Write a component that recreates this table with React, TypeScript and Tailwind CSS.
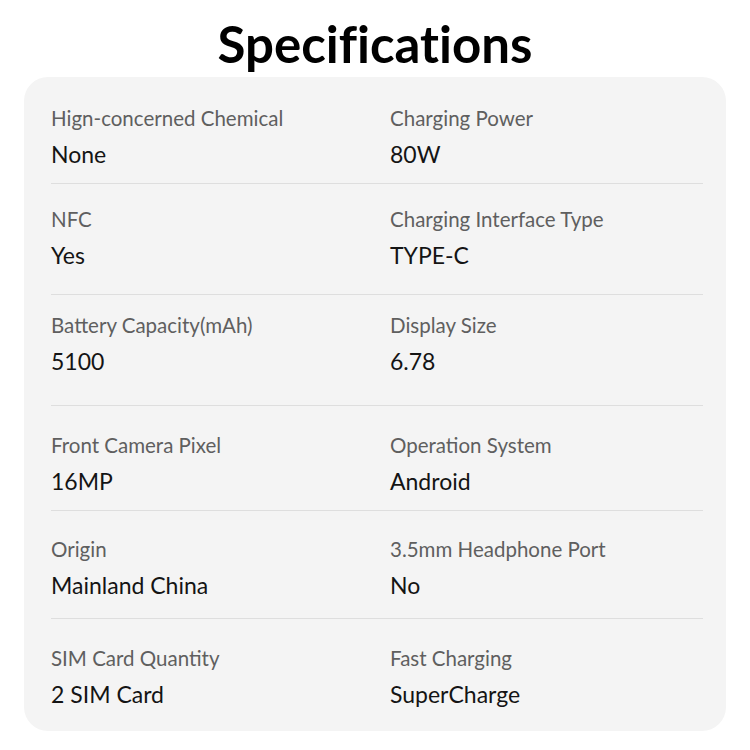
const specs = [
  { h: "h-[107px] pt-[30px]", left: ["Hign-concerned Chemical", "None"], right: ["Charging Power", "80W"] },
  { h: "h-[111px] pt-[24px]", left: ["NFC", "Yes"], right: ["Charging Interface Type", "TYPE-C"] },
  { h: "h-[111px] pt-[19px]", left: ["Battery Capacity(mAh)", "5100"], right: ["Display Size", "6.78"] },
  { h: "h-[105px] pt-[28px]", left: ["Front Camera Pixel", "16MP"], right: ["Operation System", "Android"] },
  { h: "h-[108px] pt-[27px]", left: ["Origin", "Mainland China"], right: ["3.5mm Headphone Port", "No"] },
  { h: "h-[112px] pt-[28px]", left: ["SIM Card Quantity", "2 SIM Card"], right: ["Fast Charging", "SuperCharge"] },
];

function Cell({ label, value }: { label: string; value: string }) {
  return (
    <div className="flex flex-col">
      <span className="text-[20.5px] leading-[22px] text-[#5f5f5f] whitespace-nowrap">{label}</span>
      <span className="mt-[11px] text-[23px] leading-[28px] text-[#141414]">{value}</span>
    </div>
  );
}

export default function App() {
  return (
    <div className="w-[750px] h-[750px] bg-white font-['Lato',sans-serif] flex flex-col">
      <h1 className="h-[77px] pt-[14px] text-center text-[51px] leading-[60px] font-bold text-black [font-variant-ligatures:no-common-ligatures]">
        Specifications
      </h1>
      <div className="mx-[24px] rounded-[24px] bg-[#f4f4f4] pl-[27px] pr-[23px]">
        {specs.map((row, i) => (
          <div
            key={i}
            className={`${row.h} grid grid-cols-[339px_1fr] ${i < specs.length - 1 ? "border-b border-[#dedede]" : ""}`}
          >
            <Cell label={row.left[0]} value={row.left[1]} />
            <Cell label={row.right[0]} value={row.right[1]} />
          </div>
        ))}
      </div>
    </div>
  );
}
